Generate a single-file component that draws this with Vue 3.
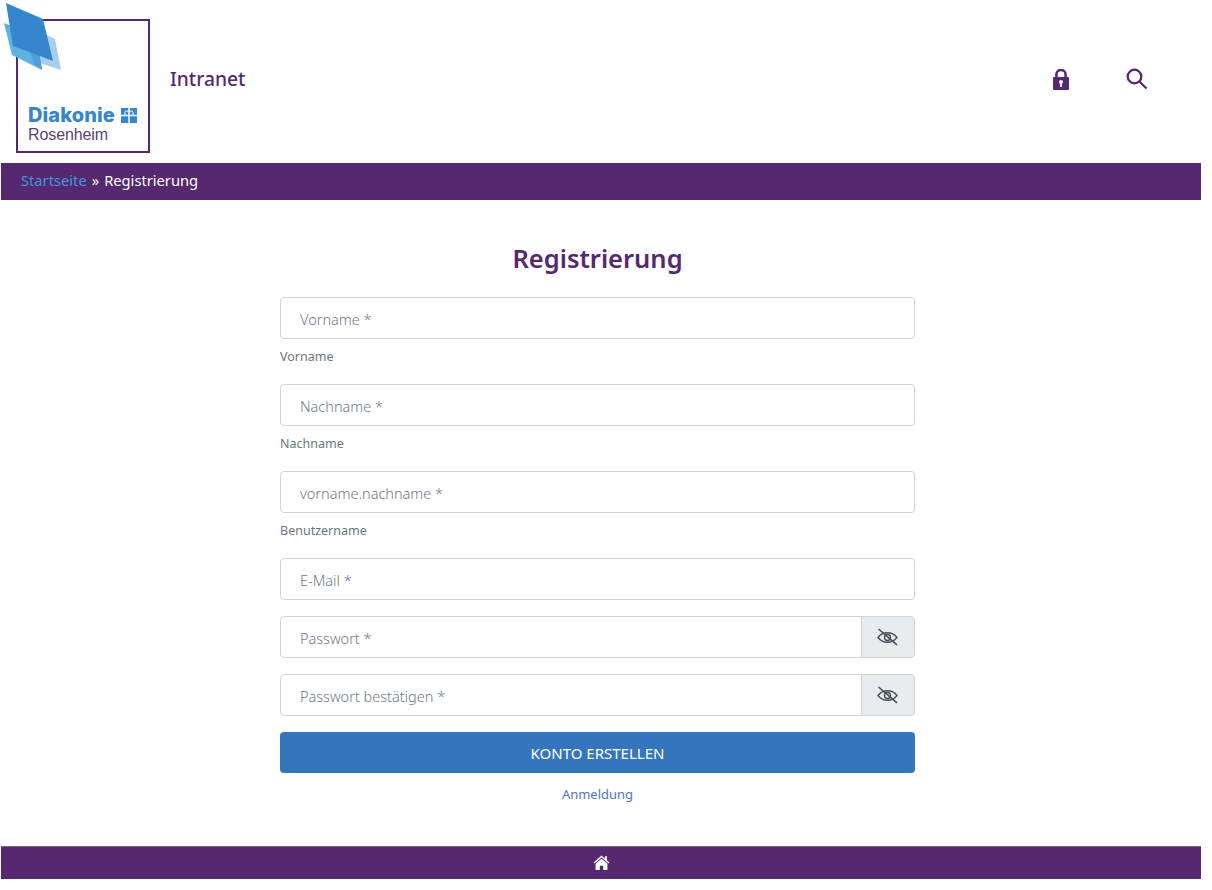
<template>
  <div class="page">
    <header class="top">
      <div class="logo">
        <svg class="logo-mark" width="62" height="72" viewBox="0 0 62 72">
          <polygon points="43,33 55,39 61,70 40,63" fill="#a5cfee" />
          <polygon points="4,23 34,35 42,70 12,55" fill="#5cb2e0" />
          <polygon points="30,49 40,55 42,70 34,64" fill="#4f9fd8" />
          <polygon points="6,3 43,19 53,61 13,46" fill="#3586cd" />
        </svg>
        <div class="logo-name">
          <span>Diakonie</span>
          <svg width="16" height="15" viewBox="0 0 16 15">
            <rect width="16" height="15" fill="#3586cd" />
            <path d="M0 7.500H16M8 0V15" stroke="#fff" stroke-width="1.500" />
            <path d="M4 7V4.500Q4 3 5.500 3H10.500Q12 3 12 4.500V7" fill="none" stroke="#fff" stroke-width="1" />
          </svg>
        </div>
        <div class="logo-place">Rosenheim</div>
      </div>
      <div class="site-name">Intranet</div>
      <nav class="top-icons">
        <svg class="lock" width="16" height="21" viewBox="0 0 16 21">
          <path d="M3.400 9V5.600a4.600 4.600 0 0 1 9.200 0V9" fill="none" stroke="#55286f" stroke-width="2.600" />
          <rect x="0" y="8" width="16" height="13" rx="1" fill="#55286f" />
          <circle cx="8" cy="13" r="2" fill="#fff" />
          <rect x="7.100" y="13.500" width="1.800" height="4.500" fill="#fff" />
        </svg>
        <svg class="search" width="22" height="22" viewBox="0 0 22 22">
          <circle cx="8.500" cy="8.500" r="6.800" fill="none" stroke="#55286f" stroke-width="2.300" />
          <path d="M13.500 13.500L20.500 20.500" stroke="#55286f" stroke-width="2.200" />
        </svg>
      </nav>
    </header>

    <div class="crumbs">
      <a class="crumb-link" href="#">Startseite</a>
      <span class="crumb-sep">»</span>
      <span>Registrierung</span>
    </div>

    <main class="content">
      <h1>Registrierung</h1>
      <form class="form" @submit.prevent>
        <div v-for="f in labelled" :key="f.label" class="field">
          <input class="input" type="text" :placeholder="f.placeholder" />
          <small>{{ f.label }}</small>
        </div>

        <input class="input solo" type="email" placeholder="E-Mail *" />

        <div v-for="p in passwords" :key="p" class="group">
          <input class="input" type="password" :placeholder="p" />
          <span class="eye">
            <svg width="21" height="18" viewBox="0 0 21 18" fill="none" stroke="#495057" stroke-width="1.400">
              <path d="M1 9.500C3.500 6.300 6.700 4.800 10.500 4.800s7 1.500 9.500 4.700c-2.500 3.200-5.700 4.800-9.500 4.800S3.500 12.700 1 9.500z" />
              <circle cx="10.500" cy="9.500" r="3" />
              <path d="M1.500 1L20 16.800" stroke-width="1.600" />
            </svg>
          </span>
        </div>

        <button class="submit" type="submit">KONTO ERSTELLEN</button>
        <a class="login" href="#">Anmeldung</a>
      </form>
    </main>

    <footer class="bottom">
      <svg class="home" width="17" height="15" viewBox="0 0 17 15">
        <path d="M8.500 0.500L0.500 7.500l1 1.100L8.500 2.600l7 6 1-1.100-2.600-2.200V1.200h-2v2.400z" fill="#fff" />
        <path d="M8.500 3.800L2.600 8.800V15h4.200v-4.200h3.400V15h4.200V8.800z" fill="#fff" />
      </svg>
    </footer>
  </div>
</template>

<script setup>
// Kentät joissa on selite alla
const labelled = [
  { placeholder: "Vorname *", label: "Vorname" },
  { placeholder: "Nachname *", label: "Nachname" },
  { placeholder: "vorname.nachname *", label: "Benutzername" },
];

const passwords = ["Passwort *", "Passwort bestätigen *"];
</script>

<style scoped>
.page {
  width: 1200px;
  margin-left: 1px;
  font-family: "Noto Sans", "Open Sans", sans-serif;
  color: #55286f;
}
.top { height: 163px; display: flex; align-items: center; }
.logo {
  position: relative;
  align-self: flex-start;
  box-sizing: border-box;
  width: 134px;
  height: 134px;
  margin: 19px 0 0 15px;
  border: 2px solid #55286f;
  padding: 84px 0 0 10px;
  font-family: "Liberation Sans", Arial, sans-serif;
}
.logo-mark { position: absolute; left: -18px; top: -21px; }
.logo-name {
  display: flex;
  align-items: center;
  gap: 6px;
  font-family: Inter, "Liberation Sans", sans-serif;
  font-size: 20px;
  font-weight: 800;
  line-height: 20px;
  color: #3586cd;
  letter-spacing: 0.1px;
}
.logo-place { font-size: 16px; line-height: 20px; color: #5a3f78; letter-spacing: -0.1px; }
.site-name { margin: 0 0 7px 20px; font-size: 19.2px; font-weight: 500; }
.top-icons { margin: 0 0 5px auto; display: flex; align-items: center; gap: 57px; padding-right: 53px; }
.crumbs {
  height: 37px;
  box-sizing: border-box;
  padding-left: 20px;
  background: #55286f;
  color: #fff;
  font-size: 14.7px;
  line-height: 35px;
}
.crumb-link { color: #3f97dc; text-decoration: none; }
.crumb-sep { margin: 0 5px; }
.content { display: flex; flex-direction: column; align-items: center; height: 646px; padding-right: 7px; box-sizing: border-box; }
h1 { margin: 38px 0 19px; font-size: 25.5px; line-height: 40px; font-weight: 600; color: #55286f; }
.form { width: 635px; display: flex; flex-direction: column; }
.field { height: 87px; }
.field small {
  display: block;
  margin-top: 9px;
  font-size: 12.5px;
  line-height: 17px;
  color: #6a7580;
}
.input {
  display: block;
  width: 100%;
  height: 42px;
  box-sizing: border-box;
  padding: 2px 19px 0;
  border: 1px solid #ced4da;
  border-radius: 4px;
  background: #fff;
  font: inherit;
  font-size: 14.5px;
  font-weight: 300;
  color: #495057;
  outline: none;
}
.input::placeholder { color: #6c7a8d; opacity: 1; }
.solo { margin-bottom: 16px; }
.group { display: flex; height: 42px; margin-bottom: 16px; }
.group .input { flex: 1; min-width: 0; border-radius: 4px 0 0 4px; }
.eye {
  width: 54px;
  box-sizing: border-box;
  display: flex;
  align-items: center;
  justify-content: center;
  margin-left: -1px;
  padding-right: 2px;
  border: 1px solid #ced4da;
  border-radius: 0 4px 4px 0;
  background: #e9ecef;
}
.submit {
  height: 41px;
  border: none;
  border-radius: 4px;
  background: #3575bd;
  color: #fff;
  font: inherit;
  font-size: 15px;
  cursor: pointer;
}
.login {
  margin-top: 12px;
  text-align: center;
  font-size: 13px;
  line-height: 18px;
  color: #4a78c0;
  text-decoration: none;
}
.bottom {
  height: 33px;
  box-sizing: border-box;
  border-top: 1px solid #6b6b6b;
  background: #55286f;
  display: flex;
  align-items: center;
  justify-content: center;
}
.home { margin-bottom: 2px; }
</style>

<style>
body { background: #fff; }
</style>
